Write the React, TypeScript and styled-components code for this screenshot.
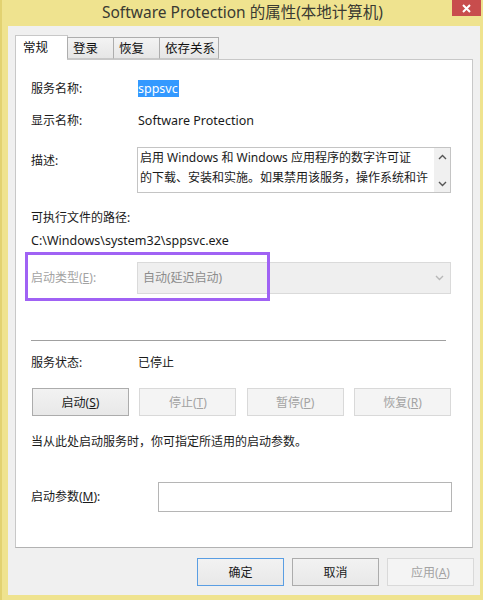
import styled, { createGlobalStyle } from 'styled-components';

const GlobalStyle = createGlobalStyle`
  html, body {
    margin: 0;
    padding: 0;
    background: #efe38f;
  }
  body {
    font-family: "Noto Sans", "Noto Sans CJK SC", sans-serif;
    font-size: 12px;
    color: #1a1a1a;
  }
`;

const Window = styled.div`
  width: 483px;
  height: 600px;
  box-sizing: border-box;
  display: flex;
  flex-direction: column;
  background: #efe38f;
  border-left: 2px solid #e2d271;
`;

const TitleBar = styled.div`
  height: 26px;
  display: grid;
  grid-template-columns: 1fr auto 1fr;
`;

const Title = styled.div`
  grid-column: 2;
  font-size: 15.5px;
  line-height: 24px;
  color: #3a3a32;
  white-space: nowrap;
`;

const CloseButton = styled.div`
  grid-column: 3;
  justify-self: end;
  width: 29px;
  height: 16px;
  margin-right: 2px;
  background: #c84d4d;
  display: flex;
  align-items: center;
  justify-content: center;
`;

const Body = styled.div`
  flex: 1;
  margin: 0 3px 5px 6px;
  padding: 9px 7px 9px 7px;
  background: #f0f0f0;
  display: flex;
  flex-direction: column;
`;

const TabRow = styled.div`
  height: 24px;
  display: flex;
  align-items: flex-end;
  position: relative;
  z-index: 1;
`;

const Tab = styled.div<{ $active?: boolean; $width: number }>`
  box-sizing: border-box;
  width: ${p => p.$width}px;
  height: ${p => (p.$active ? 25 : 22)}px;
  margin-bottom: ${p => (p.$active ? -1 : 0)}px;
  margin-right: -1px;
  padding: ${p => (p.$active ? '3px 0 0 7px' : '2px 0 0 5px')};
  border: 1px solid ${p => (p.$active ? '#c8c8c8' : '#adadad')};
  border-bottom: ${p => (p.$active ? 'none' : '1px solid #c8c8c8')};
  background: ${p => (p.$active ? '#fff' : 'linear-gradient(#f3f3f3, #e6e6e6)')};
  font-size: 12.5px;
  line-height: 17px;
  color: #111;
  white-space: nowrap;
`;

const Panel = styled.div`
  height: 489px;
  box-sizing: border-box;
  background: #fff;
  border: 1px solid #c8c8c8;
  border-bottom-color: #b2b2b2;
  padding: 19px 21px 0 15px;
  display: flex;
  flex-direction: column;
`;

const FieldRow = styled.div<{ $top: number; $label?: number }>`
  display: grid;
  grid-template-columns: ${p => p.$label ?? 107}px 1fr;
  align-items: center;
  margin-top: ${p => p.$top}px;
  line-height: 20px;
  position: relative;
`;

const Label = styled.div<{ $disabled?: boolean; $alignTop?: boolean }>`
  color: ${p => (p.$disabled ? '#a3a3a3' : '#1a1a1a')};
  align-self: ${p => (p.$alignTop ? 'start' : 'center')};
  padding-top: ${p => (p.$alignTop ? 4 : 0)}px;
  white-space: nowrap;
`;

const Value = styled.div<{ $latin?: boolean }>`
  font-size: ${p => (p.$latin ? 12.5 : 12)}px;
  white-space: nowrap;
`;

const Selected = styled.span`
  background: #3399ff;
  color: #fff;
  padding: 0 1px 0 0;
  line-height: 17px;
  display: inline-block;
`;

const TextLine = styled.div<{ $top: number; $latin?: boolean }>`
  margin-top: ${p => p.$top}px;
  font-size: ${p => (p.$latin ? 12.5 : 12)}px;
  line-height: 20px;
  white-space: nowrap;
`;

const DescBox = styled.div`
  margin-left: -1px;
  height: 46px;
  box-sizing: border-box;
  border: 1px solid #c4c4c4;
  display: flex;
  overflow: hidden;
`;

const DescText = styled.div`
  flex: 1;
  padding: 0 0 0 2px;
  line-height: 20px;
  white-space: nowrap;
  overflow: hidden;
`;

const ScrollBar = styled.div`
  width: 16px;
  background: #f0f0f0;
  display: flex;
  flex-direction: column;
  justify-content: space-between;
  align-items: center;
  padding: 6px 0 5px;
`;

const Combo = styled.div`
  margin-left: -1px;
  height: 32px;
  box-sizing: border-box;
  border: 1px solid #dadada;
  background: #efefef;
  display: flex;
  align-items: center;
  justify-content: space-between;
  padding: 0 6px 0 5px;
  color: #8c8c8c;
`;

const Highlight = styled.div`
  position: absolute;
  left: -6px;
  top: -10px;
  width: 245px;
  height: 49px;
  box-sizing: border-box;
  border: 3px solid #a062f4;
  pointer-events: none;
`;

const Separator = styled.div`
  margin: 46px 5px 0 0;
  height: 1px;
  background: #a0a0a0;
`;

const ButtonRow = styled.div`
  margin-top: 15px;
  padding-left: 1px;
  display: flex;
  justify-content: space-between;
`;

const Button = styled.div<{ $disabled?: boolean; $default?: boolean; $width?: number }>`
  width: ${p => p.$width ?? 97}px;
  height: 28px;
  box-sizing: border-box;
  display: flex;
  align-items: center;
  justify-content: center;
  border: 1px solid
    ${p => (p.$default ? '#5a9ee3' : p.$disabled ? '#d9d9d9' : '#acacac')};
  background: ${p => (p.$disabled ? '#f4f4f4' : 'linear-gradient(#f2f2f2, #e8e8e8)')};
  color: ${p => (p.$disabled ? '#a3a3a3' : '#1a1a1a')};
  white-space: nowrap;
`;

const ParamInput = styled.div`
  height: 30px;
  margin-right: -1px;
  box-sizing: border-box;
  border: 1px solid #b5b5b5;
  background: #fff;
`;

const Footer = styled.div`
  margin-top: 10px;
  margin-right: -1px;
  display: flex;
  justify-content: flex-end;
  gap: 8px;
`;

function Chevron({ up, color = '#555' }: { up?: boolean; color?: string }) {
  return (
    <svg width="9" height="6" viewBox="0 0 9 6">
      <path
        d={up ? 'M1 5 L4.5 1.5 L8 5' : 'M1 1 L4.5 4.5 L8 1'}
        fill="none"
        stroke={color}
        strokeWidth="1.4"
      />
    </svg>
  );
}

export default function App() {
  return (
    <>
      <GlobalStyle />
      <Window>
        <TitleBar>
          <Title>Software Protection 的属性(本地计算机)</Title>
          <CloseButton>
            <svg width="9" height="9" viewBox="0 0 9 9">
              <path d="M1 1 L8 8 M8 1 L1 8" stroke="#fff" strokeWidth="2" />
            </svg>
          </CloseButton>
        </TitleBar>
        <Body>
          <TabRow>
            <Tab $active $width={53}>常规</Tab>
            <Tab $width={47}>登录</Tab>
            <Tab $width={47}>恢复</Tab>
            <Tab $width={60}>依存关系</Tab>
          </TabRow>
          <Panel>
            <FieldRow $top={0}>
              <Label>服务名称:</Label>
              <Value $latin>
                <Selected>sppsvc</Selected>
              </Value>
            </FieldRow>
            <FieldRow $top={12}>
              <Label>显示名称:</Label>
              <Value $latin>Software Protection</Value>
            </FieldRow>
            <FieldRow $top={16}>
              <Label $alignTop>描述:</Label>
              <DescBox>
                <DescText>
                  启用 Windows 和 Windows 应用程序的数字许可证
                  <br />
                  的下载、安装和实施。如果禁用该服务，操作系统和许
                </DescText>
                <ScrollBar>
                  <Chevron up />
                  <Chevron />
                </ScrollBar>
              </DescBox>
            </FieldRow>
            <TextLine $top={15}>可执行文件的路径:</TextLine>
            <TextLine $top={3} $latin>
              C:\Windows\system32\sppsvc.exe
            </TextLine>
            <FieldRow $top={11}>
              <Label $disabled>
                启动类型(<u>E</u>):
              </Label>
              <Combo>
                <span>自动(延迟启动)</span>
                <Chevron color="#b8b8b8" />
              </Combo>
              <Highlight />
            </FieldRow>
            <Separator />
            <FieldRow $top={12}>
              <Label>服务状态:</Label>
              <Value>已停止</Value>
            </FieldRow>
            <ButtonRow>
              <Button>
                启动(<u>S</u>)
              </Button>
              <Button $disabled>
                停止(<u>T</u>)
              </Button>
              <Button $disabled>
                暂停(<u>P</u>)
              </Button>
              <Button $disabled>
                恢复(<u>R</u>)
              </Button>
            </ButtonRow>
            <TextLine $top={16}>当从此处启动服务时，你可指定所适用的启动参数。</TextLine>
            <FieldRow $top={30} $label={127}>
              <Label>
                启动参数(<u>M</u>):
              </Label>
              <ParamInput />
            </FieldRow>
          </Panel>
          <Footer>
            <Button $default $width={87}>确定</Button>
            <Button $width={87}>取消</Button>
            <Button $disabled $width={87}>
              应用(<u>A</u>)
            </Button>
          </Footer>
        </Body>
      </Window>
    </>
  );
}
